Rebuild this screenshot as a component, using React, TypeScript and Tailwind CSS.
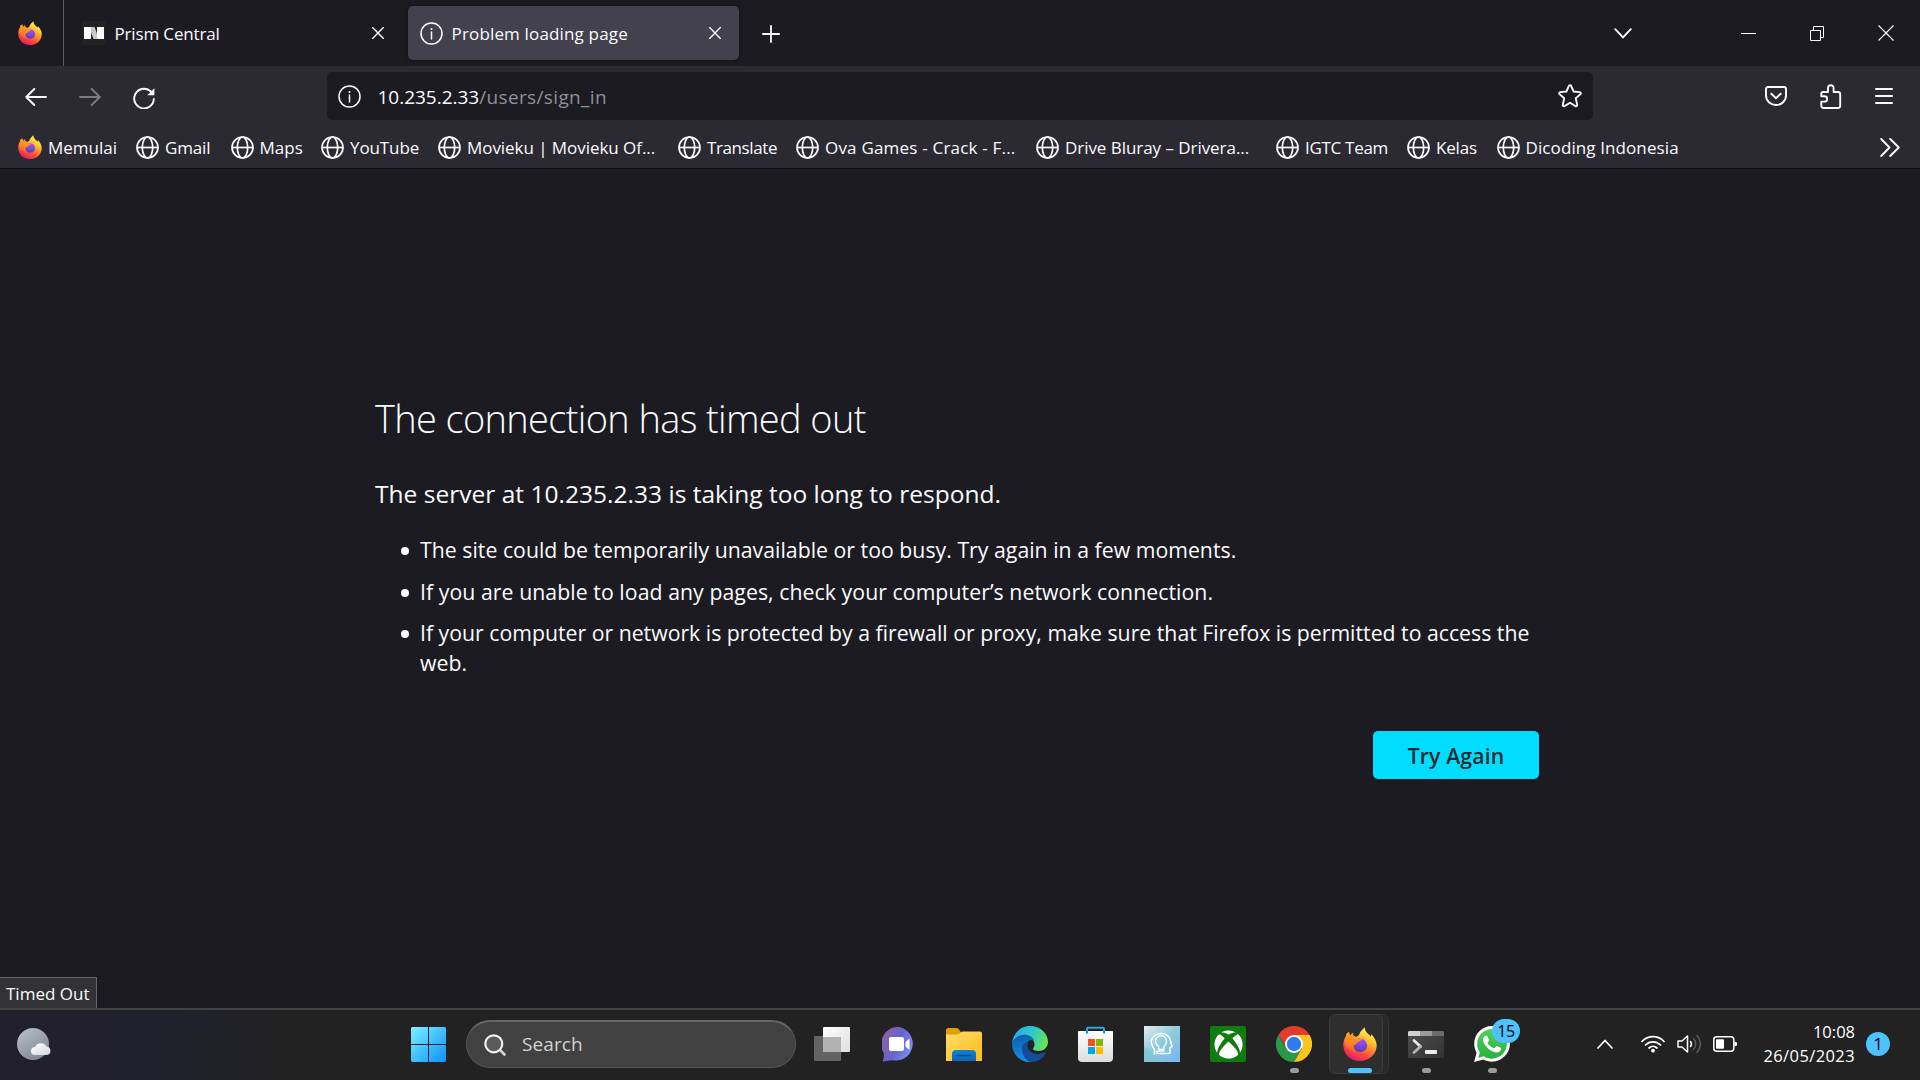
import React from "react";
import { FaXbox, FaWhatsapp } from "react-icons/fa";

function FirefoxIcon({ className }: { className: string }) {
  return (
    <svg viewBox="0 0 102 102" className={className}>
      <defs>
        <linearGradient id="fxBody" x1="0.78" y1="0.05" x2="0.3" y2="1">
          <stop offset="0" stopColor="#fff44f" />
          <stop offset="0.3" stopColor="#ffc536" />
          <stop offset="0.5" stopColor="#ff8a2c" />
          <stop offset="0.72" stopColor="#ff4a3c" />
          <stop offset="1" stopColor="#e5166e" />
        </linearGradient>
        <radialGradient id="fxGlobe" cx="0.6" cy="0.2" r="0.85">
          <stop offset="0" stopColor="#a24bf2" />
          <stop offset="0.6" stopColor="#7347d8" />
          <stop offset="1" stopColor="#4b3aa6" />
        </radialGradient>
        <linearGradient id="fxHead" x1="0.5" y1="0" x2="0.3" y2="1">
          <stop offset="0" stopColor="#ffa61f" />
          <stop offset="0.5" stopColor="#ff8a22" />
          <stop offset="1" stopColor="#ff5438" />
        </linearGradient>
      </defs>
      <path
        d="M65 1c1 14 10 18 19 28 1-4 0-6 0-8 10 9 18 23 17 37-2 26-23 44-50 44C23 102 2 82 1 56 0 44 4 34 9 27c0-5 3-9 9-12l2 12c8-2 14-1 20 3l8-6C51 13 58 9 65 1z"
        fill="url(#fxBody)"
      />
      <circle cx="52" cy="54" r="21" fill="url(#fxGlobe)" />
      <path
        d="M9 27c0-5 3-9 9-12l3 11c2-4 6-7 10-9-1 5 0 9 3 12 6 5 14 7 22 7-1 6-9 7-12 10-1 4-9 6-12 10-2 6 3 14 9 18-12 2-26-4-33-18-3-8-2-19 1-29z"
        fill="url(#fxHead)"
      />
      <path d="M46 30c6-6 16-4 21 2 8 8 8 18 5 24 0-12-8-19-16-20-4 0-8-2-10-6z" fill="#ffb52e" />
    </svg>
  );
}

function GlobeIcon() {
  return (
    <svg viewBox="0 0 23 23" className="w-[23px] h-[23px] shrink-0" fill="none" stroke="#fbfbfe" strokeWidth="1.7">
      <circle cx="11.5" cy="11.5" r="10.5" />
      <ellipse cx="11.5" cy="11.5" rx="5.2" ry="10.5" />
      <path d="M1 11.5h21" />
    </svg>
  );
}

function InfoIcon() {
  return (
    <svg viewBox="0 0 23 23" className="w-[23px] h-[23px] shrink-0" fill="none" stroke="#fbfbfe" strokeWidth="1.5">
      <circle cx="11.5" cy="11.5" r="10.5" />
      <path d="M11.5 10v7" strokeLinecap="round" />
      <circle cx="11.5" cy="6.9" r="1" fill="#fbfbfe" stroke="none" />
    </svg>
  );
}

function CloseIcon() {
  return (
    <svg viewBox="0 0 12 12" className="w-3 h-3 shrink-0" stroke="#fbfbfe" strokeWidth="1.4" strokeLinecap="round">
      <path d="M.6.6l10.8 10.8M11.4.6L.6 11.4" />
    </svg>
  );
}

function TabBar() {
  return (
    <div className="flex h-[66px] bg-[#1c1b22]">
      <div className="flex w-16 items-center border-r border-[#5b5b60] pl-[18px]">
        <FirefoxIcon className="w-6 h-6" />
      </div>
      <div className="flex w-[344px] items-center pl-[18px]">
        <div className="flex w-6 h-6 shrink-0 items-center justify-center rounded-[2px] bg-[#222222]">
          <svg viewBox="0 0 20 12" className="w-5 h-3">
            <path d="M5 0h5.500L15 12H9.500z" fill="#c9c9c9" />
            <path d="M0 0h6l1 1.500V12H0zM13 0h7v12h-6l-1-1.500z" fill="#ffffff" />
          </svg>
        </div>
        <span className="w-[266px] shrink-0 pt-px pl-[8.500px] text-[17px] tracking-[-0.15px]">Prism Central</span>
        <CloseIcon />
      </div>
      <div className="mt-[6px] flex h-[54px] w-[331px] items-center rounded-[5px] bg-[#42414d] pl-3 shadow-[0_0_4px_rgba(0,0,0,0.5)]">
        <InfoIcon />
        <span className="w-[266px] pt-px pl-[8.500px] text-[17px] tracking-[0.16px]">Problem loading page</span>
        <CloseIcon />
      </div>
      <svg viewBox="0 0 18 18" className="ml-[23px] mt-[25px] w-[18px] h-[18px]" stroke="#fbfbfe" strokeWidth="1.8" strokeLinecap="round">
        <path d="M9 .9v16.200M.9 9h16.200" />
      </svg>
      <div className="ml-auto flex items-center pr-[26px]">
        <svg viewBox="0 0 18 11" className="mr-[109px] w-[18px] h-[11px]" fill="none" stroke="#fbfbfe" strokeWidth="1.900" strokeLinecap="round">
          <path d="M1.200 1.200L9 9.400l7.800-8.200" />
        </svg>
        <div className="mr-[54px] h-px w-[15px] bg-white" />
        <svg viewBox="0 0 14 15" className="mr-[54px] w-[14px] h-[15px]" fill="none" stroke="#ffffff" strokeWidth="1">
          <path d="M.5 4.500h10v10H.5zM3.500 4V.5h10v11h-3" />
        </svg>
        <svg viewBox="0 0 16 16" className="w-4 h-4" stroke="#ffffff" strokeWidth="1.100">
          <path d="M.5.5l15 15M15.500.5l-15 15" />
        </svg>
      </div>
    </div>
  );
}

function NavBar() {
  return (
    <div className="flex h-[60px] items-center">
      <svg viewBox="0 0 22 18" className="mt-[2px] ml-[25px] w-[22px] h-[18px]" fill="none" stroke="#fbfbfe" strokeWidth="1.900" strokeLinecap="round" strokeLinejoin="round">
        <path d="M21 9H1.200M9.300 1L1.200 9l8.100 8" />
      </svg>
      <svg viewBox="0 0 22 18" className="mt-[2px] ml-8 w-[22px] h-[18px]" fill="none" stroke="#7c7b82" strokeWidth="1.900" strokeLinecap="round" strokeLinejoin="round">
        <path d="M1 9h19.800M12.700 1l8.100 8-8.100 8" />
      </svg>
      <svg viewBox="0 0 22 22" className="ml-8 mt-1 w-[22px] h-[22px]" fill="none" stroke="#fbfbfe" strokeWidth="1.900" strokeLinecap="round">
        <path d="M20.800 12A9.800 9.800 0 1 1 17 3.800l2 1.700" />
        <path d="M21.400 1.200v7h-7z" fill="#fbfbfe" stroke="none" />
      </svg>
      <div className="ml-[172px] flex h-12 w-[1266px] items-center rounded-[5px] bg-[#1c1b22] pl-[11px] pr-[11px]">
        <InfoIcon />
        <span className="ml-[16.500px] pt-[3px] text-[19px] tracking-[-0.02px] text-[#fbfbfe]">
          10.235.2.33<span className="tracking-[0.36px] text-[#8f8f95]">/users/sign_in</span>
        </span>
        <svg viewBox="0 0 24 24" className="ml-auto w-6 h-6" fill="none" stroke="#fbfbfe" strokeWidth="1.900" strokeLinejoin="round">
          <path d="M10.900 1.900c.4-1 1.800-1 2.200 0l2.500 5.600 6.100.6c1.100.1 1.500 1.300.8 2l-4.700 4.200 1.400 6.600c.2 1-.9 1.700-1.700 1.200L12 18.700l-5.500 3.400c-.8.500-1.900-.2-1.700-1.200l1.400-6.600-4.700-4.200c-.7-.7-.3-1.900.8-2l6.100-.6z" />
        </svg>
      </div>
      <svg viewBox="0 0 22 20" className="ml-[172px] w-[22px] h-5" fill="none" stroke="#fbfbfe" strokeWidth="1.900" strokeLinecap="round" strokeLinejoin="round">
        <path d="M3 1h16c1.200 0 2 .8 2 2v6.500a10 9.500 0 0 1-20 0V3c0-1.200.8-2 2-2z" />
        <path d="M6.300 7.700L11 12.200l4.700-4.500" />
      </svg>
      <svg viewBox="0 0 22 25" className="ml-[33px] w-[22px] h-[25px]" fill="none" stroke="#fbfbfe" strokeWidth="1.900" strokeLinejoin="round">
        <path d="M3 8h5V4a2.800 2.800 0 0 1 5.600 0v4H18c1.400 0 2.200.8 2.200 2.200v11.600c0 1.400-.8 2.200-2.200 2.200H3.500c-1.400 0-2.200-.8-2.200-2.200v-4.200h3.200a2.700 2.700 0 0 0 0-5.400H1.300V9.900C1.300 8.700 2 8 3 8z" />
      </svg>
      <div className="mb-[1px] ml-[33px] flex w-[18px] flex-col gap-[5px]">
        <div className="h-[2px] rounded bg-[#fbfbfe]" />
        <div className="h-[2px] rounded bg-[#fbfbfe]" />
        <div className="h-[2px] rounded bg-[#fbfbfe]" />
      </div>
    </div>
  );
}

function Bookmark({ label, className }: { label: string; className: string }) {
  return (
    <div className={"flex shrink-0 items-center gap-[6px] text-[17px] " + className}>
      <GlobeIcon />
      <span>{label}</span>
    </div>
  );
}

function BookmarksBar() {
  return (
    <div className="flex h-[42px] items-center pt-px pl-[18px]">
      <div className="flex w-[118px] items-center gap-[6px] text-[17px]">
        <FirefoxIcon className="mb-[2px] w-6 h-6 shrink-0" />
        <span>Memulai</span>
      </div>
      <Bookmark label="Gmail" className="w-[94.500px] tracking-[-0.15px]" />
      <Bookmark label="Maps" className="w-[90.500px]" />
      <Bookmark label="YouTube" className="w-[117px] tracking-[-0.1px]" />
      <Bookmark label="Movieku | Movieku Of..." className="w-[240px] tracking-[-0.05px]" />
      <Bookmark label="Translate" className="w-[118px] tracking-[-0.4px]" />
      <Bookmark label="Ova Games - Crack - F..." className="w-[240px] tracking-[0.2px]" />
      <Bookmark label="Drive Bluray – Drivera..." className="w-[240px] tracking-[-0.05px]" />
      <Bookmark label="IGTC Team" className="w-[131px] tracking-[-0.3px]" />
      <Bookmark label="Kelas" className="w-[89.500px] tracking-[-0.2px]" />
      <Bookmark label="Dicoding Indonesia" className="w-[200px] tracking-[0.1px]" />
      <svg viewBox="0 0 20 19" className="ml-auto mr-5 w-5 h-[19px]" fill="none" stroke="#fbfbfe" strokeWidth="1.900" strokeLinecap="round" strokeLinejoin="round">
        <path d="M1.200 1l8.300 8.500L1.200 18M10.200 1l8.600 8.500-8.600 8.500" />
      </svg>
    </div>
  );
}

function ErrorPage() {
  return (
    <main className="flex flex-1 flex-col border-t border-[#0c0c0d] bg-[#1c1b22] pt-[224px] text-[#fbfbfe]">
      <div className="ml-[375px] w-[1164px]">
        <h1 className="text-[38px] leading-[50px] font-light tracking-[-0.65px]">The connection has timed out</h1>
        <p className="mt-[33px] text-[24.5px] leading-[36px] tracking-[0.02px]">The server at 10.235.2.33 is taking too long to respond.</p>
        <ul className="mt-[23px] flex flex-col gap-[11.500px] pl-[26px] text-[21.25px] leading-[30px]">
          <li className="flex">
            <span className="mt-3 mr-[11px] h-2 w-2 shrink-0 rounded-full bg-[#fbfbfe]" />
            <span className="tracking-[0.02px]">The site could be temporarily unavailable or too busy. Try again in a few moments.</span>
          </li>
          <li className="flex">
            <span className="mt-3 mr-[11px] h-2 w-2 shrink-0 rounded-full bg-[#fbfbfe]" />
            <span className="tracking-[0.06px]">If you are unable to load any pages, check your computer’s network connection.</span>
          </li>
          <li className="flex">
            <span className="mt-3 mr-[11px] h-2 w-2 shrink-0 rounded-full bg-[#fbfbfe]" />
            <span>If your computer or network is protected by a firewall or proxy, make sure that Firefox is permitted to access the web.</span>
          </li>
        </ul>
        <button className="mt-[53px] ml-auto flex h-12 w-[166px] items-center justify-center rounded-[5px] bg-[#00ddff] pt-[2px] text-[21.25px] font-semibold tracking-[0.1px] text-[#2b2a33]">
          Try Again
        </button>
      </div>
      <div className="mt-auto flex h-[31px] w-[97px] items-center border-t border-r border-[#66656b] bg-[#323234] pt-px pl-[6px] text-[17px] whitespace-nowrap">
        Timed Out
      </div>
    </main>
  );
}

function Slot({ children, indicator }: { children: React.ReactNode; indicator?: boolean }) {
  return (
    <div className="relative flex h-[60px] w-[66px] shrink-0 items-center justify-center">
      {children}
      {indicator && <div className="absolute bottom-[1px] h-[5px] w-[9px] rounded-full bg-[#9a9a9a]" />}
    </div>
  );
}

function Taskbar() {
  return (
    <footer className="flex h-[72px] items-center border-t-2 border-[#434343] bg-[linear-gradient(90deg,#211f2b_0px,#20202c_150px,#21222a_200px,#222222_290px)] pb-[2px] text-white">
      <svg viewBox="0 0 34 32" className="ml-[17px] w-[34px] h-8">
        <defs>
          <linearGradient id="moon" x1="0.2" y1="0" x2="0.8" y2="1">
            <stop offset="0" stopColor="#b6bec8" />
            <stop offset="1" stopColor="#7c858c" />
          </linearGradient>
          <linearGradient id="cloud" x1="0" y1="0" x2="1" y2="1">
            <stop offset="0" stopColor="#ffffff" />
            <stop offset="1" stopColor="#d2d8de" />
          </linearGradient>
        </defs>
        <circle cx="16" cy="16" r="16" fill="url(#moon)" />
        <path d="M18 27a4 4 0 0 1 0-8 6.500 6.500 0 0 1 11.500-.5A4.300 4.300 0 0 1 30 27z" fill="url(#cloud)" />
      </svg>

      <svg viewBox="0 0 35 35" className="mt-[1px] ml-[360px] w-[35px] h-[35px]">
        <defs>
          <linearGradient id="win" x1="0" y1="0" x2="35" y2="35" gradientUnits="userSpaceOnUse">
            <stop offset="0" stopColor="#7df3ff" />
            <stop offset="0.5" stopColor="#43c0ff" />
            <stop offset="1" stopColor="#0a93ff" />
          </linearGradient>
        </defs>
        <path d="M1 0h16v17H0V1zM18 0h16l1 1v16H18zM0 18h17v17H1l-1-1zM18 18h17v16l-1 1H18z" fill="url(#win)" />
      </svg>

      <div className="ml-5 flex h-12 w-[330px] items-center rounded-full border border-t-2 border-[#555555] border-t-[#666666] bg-[#414141] pl-[17px]">
        <svg viewBox="0 0 22 22" className="w-[22px] h-[22px]" fill="none">
          <path d="M15.500 15.500l5 5" stroke="#d5d5d5" strokeWidth="2.600" strokeLinecap="round" />
          <circle cx="9.800" cy="9.800" r="8.500" fill="#5a5a5a" stroke="#f2f2f2" strokeWidth="2.200" />
        </svg>
        <span className="pl-[16px] text-[19px] tracking-[0.1px] text-[#d2d2d2]">Search</span>
      </div>

      <div className="ml-[3px] flex">
        <Slot>
          <svg viewBox="0 0 36 34" className="w-9 h-[34px]">
            <defs>
              <linearGradient id="tvFront" x1="0" y1="0" x2="1" y2="1">
                <stop offset="0" stopColor="#ffffff" />
                <stop offset="1" stopColor="#dedede" />
              </linearGradient>
            </defs>
            <rect y="9" width="27" height="25" rx="1" fill="#636363" />
            <rect x="9" width="27" height="25" rx="1" fill="url(#tvFront)" />
            <path d="M9 10h18v15H9z" fill="#b2b2b2" />
          </svg>
        </Slot>
        <Slot>
          <svg viewBox="0 0 34 35" className="ml-px w-[34px] h-[35px]">
            <defs>
              <linearGradient id="chat" x1="0.1" y1="0.2" x2="1" y2="0.6">
                <stop offset="0" stopColor="#8b61ab" />
                <stop offset="0.5" stopColor="#6763c9" />
                <stop offset="1" stopColor="#7590ee" />
              </linearGradient>
            </defs>
            <path d="M17.500 0A17 17 0 1 1 10 33.200L.6 34.500c1-2.500 1.500-4.500 1.200-8.500A17 17 0 0 1 17.500 0z" fill="url(#chat)" />
            <rect x="7" y="10" width="15" height="14" rx="2" fill="#ffffff" />
            <path d="M23.500 15l4-3.500V23l-4-3.500z" fill="#ffffff" />
          </svg>
        </Slot>
        <Slot>
          <svg viewBox="0 0 36 34" className="mt-[2px] w-9 h-[34px]">
            <defs>
              <linearGradient id="folder" x1="0" y1="0" x2="1" y2="1">
                <stop offset="0" stopColor="#ffdc6b" />
                <stop offset="1" stopColor="#fcbc19" />
              </linearGradient>
              <linearGradient id="folderBase" x1="0" y1="0" x2="0" y2="1">
                <stop offset="0" stopColor="#1381d6" />
                <stop offset="1" stopColor="#0c66b4" />
              </linearGradient>
            </defs>
            <path d="M0 2c0-1 .8-2 2-2h8c1 0 2 .4 3 1.400L15 4v6H0z" fill="#dfa106" />
            <path d="M0 6.500h11c1.500 0 2.500-.7 3.500-1.700.8-.9 1.800-1.300 3-1.300H34c1.200 0 2 .8 2 2V33H0z" fill="url(#folder)" />
            <path d="M6 33v-7a4 4 0 0 1 4-4h16a4 4 0 0 1 4 4v7z" fill="url(#folderBase)" />
            <path d="M11.500 27.500h13" stroke="#0a4f93" strokeWidth="1.500" strokeLinecap="round" />
          </svg>
        </Slot>
        <Slot>
          <svg viewBox="0 0 36 36" className="w-9 h-9">
            <defs>
              <linearGradient id="edgeTop" x1="0" y1="0.3" x2="1" y2="0.6">
                <stop offset="0" stopColor="#2ba7ee" />
                <stop offset="0.5" stopColor="#2fc6cf" />
                <stop offset="1" stopColor="#6be64f" />
              </linearGradient>
              <linearGradient id="edgeLeft" x1="0.3" y1="0" x2="0.5" y2="1">
                <stop offset="0" stopColor="#0b5fae" />
                <stop offset="1" stopColor="#1493e6" />
              </linearGradient>
            </defs>
            <path d="M0 17C1 7 9 0 18 0c10 0 18 7 18 16 0 5-4 9-9 9-4 0-6-1-6-2s1.500-2 1.500-4.500C22.500 14 18 10 12 10 6 10 2 13 0 17z" fill="url(#edgeTop)" />
            <path d="M0 17C2 12 7 8.800 12 8.800c5 0 9.500 2.700 10.300 6.200-2-1.500-4.300-1-5.800 0-2.500 2-3 5-2.500 7 1 6 7 9.500 13 8-3 4-7 6-10 6C7 35.500 0 27 0 17z" fill="url(#edgeLeft)" />
            <path d="M10 22c0 8 5 14 10 14 6 0 11-4 13.500-8.500.5-1-.5-1.200-1.500-.7-5 2.200-12 1.200-15-2.800-2-3-2-6-.5-8.500C12 16.500 10 19 10 22z" fill="#114d99" />
          </svg>
        </Slot>
        <Slot>
          <svg viewBox="0 0 35 36" className="mr-px w-[35px] h-9">
            <defs>
              <linearGradient id="store" x1="0" y1="0" x2="0" y2="1">
                <stop offset="0" stopColor="#ffffff" />
                <stop offset="1" stopColor="#dcdcdc" />
              </linearGradient>
            </defs>
            <path d="M9 8V3c0-.8.4-1.200 1.200-1.200h14.600c.8 0 1.200.4 1.200 1.200v5" fill="none" stroke="#2ba8e8" strokeWidth="2" />
            <path d="M1 5h33c.6 0 1 .4 1 1v26c0 2.500-1.500 4-4 4H4c-2.500 0-4-1.500-4-4V6c0-.6.4-1 1-1z" fill="url(#store)" />
            <path d="M9 5v2.500M26 5v2.500" stroke="#1b8fd0" strokeWidth="2" />
            <path d="M10 13h7v7h-7z" fill="#f25022" />
            <path d="M18 13h7v7h-7z" fill="#7fba00" />
            <path d="M10 21h7v7h-7z" fill="#00a4ef" />
            <path d="M18 21h7v7h-7z" fill="#ffb900" />
          </svg>
        </Slot>
        <Slot>
          <svg viewBox="0 0 36 36" className="w-9 h-9">
            <defs>
              <linearGradient id="head" x1="0" y1="0" x2="0.8" y2="1">
                <stop offset="0" stopColor="#e4eeee" />
                <stop offset="0.5" stopColor="#8ecbdc" />
                <stop offset="1" stopColor="#7cb8ee" />
              </linearGradient>
            </defs>
            <path d="M0 0h36v36H0z" fill="url(#head)" />
            <path d="M0 20l10 8 9 8H0z" fill="#7cc5d2" opacity="0.7" />
            <g fill="none" stroke="#ffffff" strokeWidth="1.500" strokeLinejoin="round">
              <path d="M10.500 28.500v-5C8 20 7 17.500 7.200 15A10 9.500 0 0 1 26 13l2 7.500-2 1v4.500c0 1-.7 1.500-1.500 1.500H13v-2.500h7.500" />
              <path d="M14.500 24.500h6v-3c2-2 3-4 3-6.500a6.500 6.500 0 0 0-13 0c0 2.500 2.500 5 4 6.500z" transform="translate(2.500 2.500) scale(0.850)" />
            </g>
          </svg>
        </Slot>
        <Slot>
          <div className="flex w-9 h-9 items-center justify-center rounded-[2px] bg-[#107c10]">
            <FaXbox className="w-[29px] h-[29px] text-white" />
          </div>
        </Slot>
        <Slot indicator>
          <svg viewBox="0 0 36 36" className="w-9 h-9">
            <path d="M2.400 9A18 18 0 0 1 33.600 9H18l-8 12z" fill="#e33b2e" />
            <path d="M2.400 9l7.800 13.500H26L18 36A18 18 0 0 1 2.400 9z" fill="#2b9a48" />
            <path d="M18 36l8-13.500L18 9h15.600A18 18 0 0 1 18 36z" fill="#fcc41f" />
            <circle cx="18" cy="18" r="9" fill="#ffffff" />
            <circle cx="18" cy="18" r="7.200" fill="#2f7bec" />
          </svg>
        </Slot>
        <Slot>
          <div className="absolute top-0 left-[24px] h-[60px] w-[38px] rounded-[6px] border border-[#343434] bg-[#282828]" />
          <div className="absolute top-0 left-[2px] h-[60px] w-[54px] rounded-[6px] border border-[#3d3d3d] bg-[#2e2e2e]" />
          <FirefoxIcon className="relative mb-[1px] w-[34px] h-[34px]" />
          <div className="absolute bottom-[1px] left-[21px] h-[5px] w-6 rounded-full bg-[#4cc2ff]" />
        </Slot>
        <Slot indicator>
          <svg viewBox="0 0 36 27" className="w-9 h-[27px]">
            <defs>
              <linearGradient id="term" x1="0" y1="0" x2="1" y2="1">
                <stop offset="0" stopColor="#4d4d4d" />
                <stop offset="1" stopColor="#333333" />
              </linearGradient>
            </defs>
            <rect width="36" height="27" rx="1" fill="url(#term)" />
            <path d="M0 1l1-1h11v5H0z" fill="#cfcfcf" />
            <path d="M12 0h12v5H12z" fill="#9b9b9b" />
            <path d="M24 0h11l1 1v4H24z" fill="#6b6b6b" />
            <path d="M6 9.500l6.500 6" stroke="#e8e8e8" strokeWidth="2.800" strokeLinecap="round" />
            <path d="M12.500 15.500L6 21.500" stroke="#b5b5b5" strokeWidth="2.800" strokeLinecap="round" />
            <rect x="17" y="19" width="12" height="4" rx="0.800" fill="#ededed" />
          </svg>
        </Slot>
        <Slot indicator>
          <svg viewBox="0 0 36 36" className="w-9 h-9">
            <defs>
              <linearGradient id="wa" x1="0" y1="0" x2="0" y2="1">
                <stop offset="0" stopColor="#57d163" />
                <stop offset="1" stopColor="#23b33a" />
              </linearGradient>
            </defs>
            <path d="M3 33l2-8A16 16 0 1 1 11 31z" fill="url(#wa)" />
            <FaWhatsapp x={-2.500} y={-2.500} width={41} height={41} size={41} color="#ffffff" />
          </svg>
          <div className="absolute top-[5px] left-[33px] flex h-6 w-7 items-center justify-center rounded-full bg-[#4cc2ff] text-[16px] tracking-[-0.5px] text-black">
            15
          </div>
        </Slot>
      </div>

      <div className="ml-auto flex items-center pr-[30px]">
        <svg viewBox="0 0 16 10" className="mr-7 w-4 h-[10px]" fill="none" stroke="#ffffff" strokeWidth="1.700" strokeLinecap="round">
          <path d="M1 9l7-7.500L15 9" />
        </svg>
        <svg viewBox="0 0 24 18" className="mr-3 w-6 h-[18px]" fill="none" stroke="#ffffff" strokeWidth="1.700" strokeLinecap="round">
          <path d="M1 6.500a15 15 0 0 1 22 0M4.500 10a10.500 10.500 0 0 1 15 0M8 13a6 6 0 0 1 8 0" />
          <circle cx="12" cy="15.700" r="1.900" fill="#ffffff" stroke="none" />
        </svg>
        <svg viewBox="0 0 24 20" className="mr-3 w-6 h-5" fill="none" stroke="#ffffff" strokeWidth="1.500" strokeLinecap="round" strokeLinejoin="round">
          <path d="M1 7v6h4l5.500 5V2L5 7zM13.500 7.500a4 4 0 0 1 0 5" />
          <path d="M16.500 4.500a8 8 0 0 1 0 11M20 1.500a12.500 12.500 0 0 1 0 17" stroke="#5d5d5d" />
        </svg>
        <svg viewBox="0 0 24 16" className="mr-[25px] w-6 h-4" fill="none">
          <rect x="0.800" y="0.800" width="20" height="14.400" rx="3" stroke="#ffffff" strokeWidth="1.500" />
          <rect x="3" y="3.200" width="8" height="9.600" rx="1" fill="#ffffff" />
          <path d="M21.500 5.500l2.500 1v3l-2.500 1z" fill="#ffffff" />
        </svg>
        <div className="mr-[11px] flex w-[93px] flex-col items-end text-[16.5px] leading-6">
          <span>10:08</span>
          <span className="tracking-[0.4px]">26/05/2023</span>
        </div>
        <div className="flex w-6 h-6 items-center justify-center rounded-full bg-[#4cc2ff] text-[17px] text-black">1</div>
      </div>
    </footer>
  );
}

export default function App() {
  return (
    <div className="flex h-[1080px] w-[1920px] flex-col overflow-hidden bg-[#2b2a33] font-['Open_Sans','Noto_Sans',sans-serif] whitespace-nowrap text-[#fbfbfe]">
      <TabBar />
      <NavBar />
      <BookmarksBar />
      <div className="flex flex-1 flex-col whitespace-normal">
        <ErrorPage />
      </div>
      <Taskbar />
    </div>
  );
}
